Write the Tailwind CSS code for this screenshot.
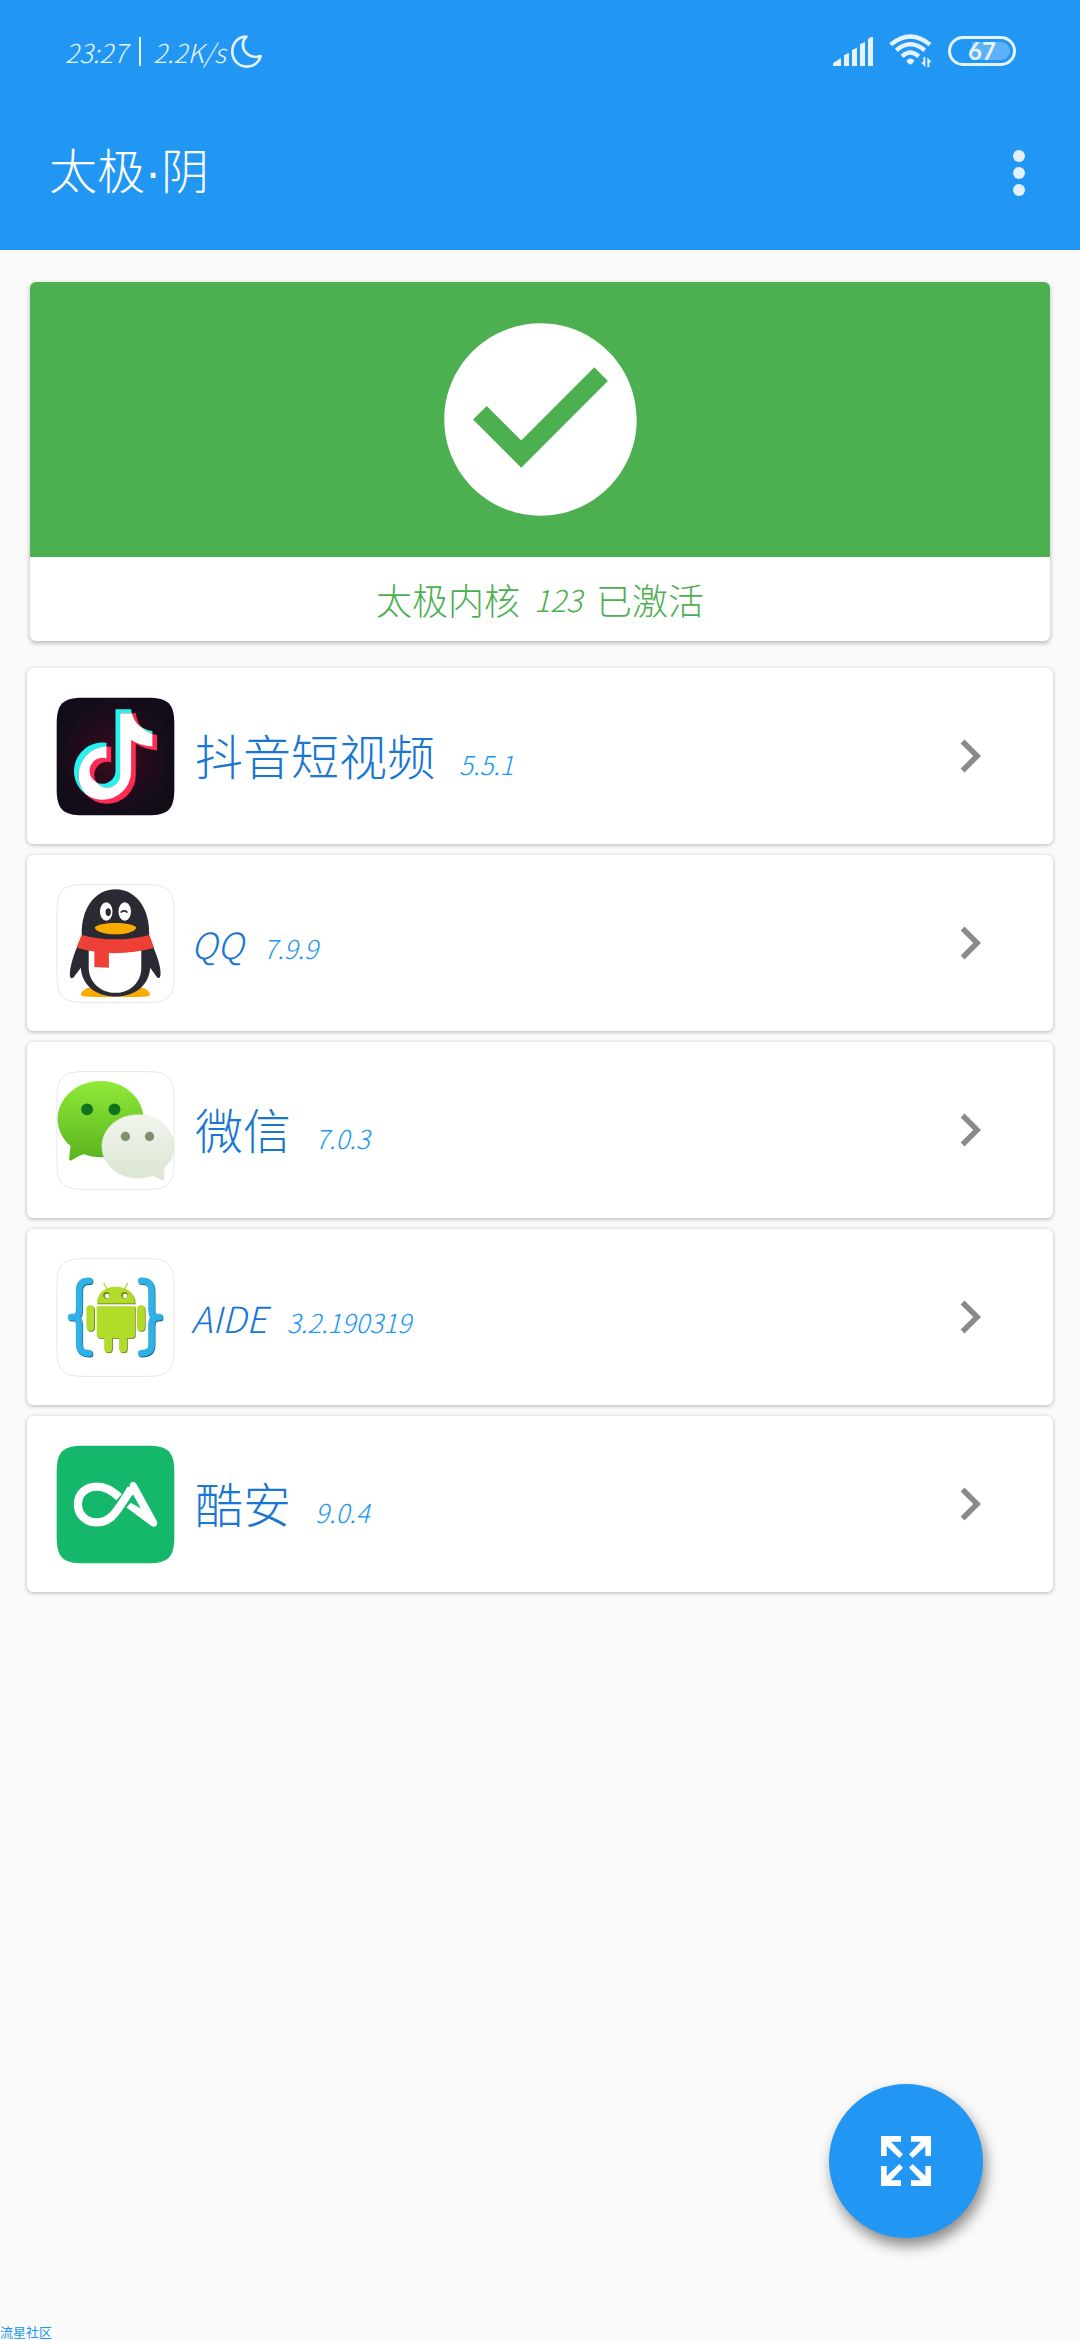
<!DOCTYPE html>
<html lang="zh-CN">
  <head>
    <meta charset="UTF-8" />
    <meta name="viewport" content="width=device-width, initial-scale=1.0" />
    <title>太极·阴</title>
    <script src="https://cdn.jsdelivr.net/npm/@tailwindcss/browser@4"></script>
  </head>
  <body class="bg-[#fafafa] min-h-screen flex flex-col font-['Noto_Sans_CJK_SC',sans-serif] font-light">

    <header class="bg-[#2196f3] text-white">
      <!-- status bar -->
      <div class="h-[102px] pl-[65px] pr-16 flex items-center justify-between text-[#e6f3fe]">
        <div class="flex items-center text-[26px] italic">
          <span>23:27</span>
          <span class="w-0.5 h-[29px] bg-[#e6f3fe] mx-3"></span>
          <span>2.2K/s</span>
          <svg class="w-[33px] h-[35px] ml-1" viewBox="668 98 100 106" fill="none" stroke="currentColor" stroke-width="8" stroke-linejoin="round">
            <path d="M718 106C690 106 675 128 675 151C675 178 695 197 719 197C740 197 756 184 761 165C738 173 707 160 707 130C707 118 712 112 718 106Z" />
          </svg>
        </div>
        <div class="flex items-center gap-4">
          <svg class="w-10 h-[29px]" viewBox="162 108 120 87" fill="currentColor">
            <path d="M162 187L186 171V195H162ZM195 163L210 155V195H195ZM219 147L234 140V195H219ZM243 130L258 123V195H243ZM267 114L276 108H282V195H267Z" />
          </svg>
          <svg class="w-[43px] h-[34px]" viewBox="329 107 129 102">
            <g fill="none" stroke="currentColor" stroke-width="13">
              <path d="M334 139Q393 90 452 139" />
              <path d="M351 156Q393 120 436 156" />
              <path d="M368 174Q393 151 418 174" />
            </g>
            <path fill="currentColor" d="M381 187Q393 172 405 187Q402 196 393 199Q384 196 381 187ZM432 177H438V207L425 192H432ZM444 207V177L457 192H450V207Z" />
          </svg>
          <div class="relative w-[68px] h-[30px] rounded-full border-3 border-current flex items-center justify-center">
            <span class="absolute right-[3px] inset-y-[3px] w-[38px] rounded-r-full bg-[#5cb1f8]"></span>
            <span class="relative font-[Lato] font-bold text-2xl leading-6">67</span>
          </div>
        </div>
      </div>
      <!-- toolbar -->
      <div class="h-[142px] mb-1.5 pl-[49px] pr-[45px] flex items-center justify-between">
        <h1 class="text-5xl font-['Liberation_Sans','Noto_Sans_CJK_SC',sans-serif]">太极·阴</h1>
        <button type="button" aria-label="更多选项" class="w-8 h-16 flex flex-col items-center justify-center gap-[5px]">
          <span class="size-3 rounded-full bg-[#e3f1fd]"></span>
          <span class="size-3 rounded-full bg-[#e3f1fd]"></span>
          <span class="size-3 rounded-full bg-[#e3f1fd]"></span>
        </button>
      </div>
    </header>

    <main class="grow pt-8">
      <section class="mx-[30px] bg-white rounded-md overflow-hidden shadow-[0_2px_5px_rgba(0,0,0,0.28)]">
        <div class="bg-[#4caf50] py-[22px] flex justify-center">
          <svg class="size-[231px] text-white" viewBox="0 0 24 24" fill="currentColor">
            <path d="M12 2C6.48 2 2 6.48 2 12s4.48 10 10 10 10-4.48 10-10S17.52 2 12 2zm-2 15l-5-5 1.41-1.41L10 14.17l7.59-7.59L19 8l-9 9z" />
          </svg>
        </div>
        <p class="h-[84px] flex items-center justify-center gap-3.5 text-[#4caf50] text-[36px]">
          <span>太极内核</span>
          <span class="text-[30px] italic">123</span>
          <span>已激活</span>
        </p>
      </section>

      <ul class="mt-[27px] mx-[27px] space-y-[11px]">
        <li>
          <a href="#" class="h-44 pl-[29px] pr-[50px] flex items-center bg-white rounded-md shadow-[0_1px_4px_rgba(0,0,0,0.28)]">
            <svg class="size-[119px]" viewBox="106 109 358 358">
              <defs>
                <radialGradient id="night"><stop offset="0" stop-color="#3a0b1e" /><stop offset="1" stop-color="#120c19" /></radialGradient>
                <path id="note" d="M285 146H332C336 180 356 206 396 211V258C372 256 350 249 332 238V332A86 86 0 1 1 258 247V294A39 39 0 1 0 285 332Z" />
                <clipPath id="note-shift"><use href="#note" transform="translate(14 12)" /></clipPath>
              </defs>
              <path fill="url(#night)" d="M188 111H382C444 111 462 129 462 191V385C462 447 444 465 382 465H188C126 465 108 447 108 385V191C108 129 126 111 188 111Z" />
              <use href="#note" fill="#25f4ee" />
              <use href="#note" fill="#fe2c55" transform="translate(14 12)" />
              <use href="#note" fill="#fff" clip-path="url(#note-shift)" />
            </svg>
            <span class="ml-5 flex items-baseline gap-6">
              <span class="text-5xl text-[#1976d2]">抖音短视频</span>
              <span class="text-[26px] italic text-[#2196f3]">5.5.1</span>
            </span>
            <svg class="size-[66px] ml-auto" viewBox="0 0 24 24" fill="#8a8a8a"><path d="M10 6L8.59 7.41 13.17 12l-4.58 4.59L10 18l6-6z" /></svg>
          </a>
        </li>
        <li>
          <a href="#" class="h-44 pl-[29px] pr-[50px] flex items-center bg-white rounded-md shadow-[0_1px_4px_rgba(0,0,0,0.28)]">
            <svg class="size-[119px]" viewBox="106 99 358 360">
              <path fill="#fff" stroke="#e6e6e6" stroke-width="3" d="M188 101H382C444 101 462 119 462 181V377C462 439 444 457 382 457H188C126 457 108 439 108 377V181C108 119 126 101 188 101Z" />
              <path fill="#faab00" d="M180 434C183 420 197 412 216 412L285 434L354 412C373 412 387 420 390 434C388 442 350 441 285 440C220 441 182 442 180 434Z" />
              <path fill="#2a2a32" d="M183 255C180 175 222 115 285 115C348 115 390 175 387 255L400 292C412 320 424 355 421 375C419 385 415 386 410 380L390 352C386 405 345 439 285 439C225 439 184 405 180 352L159 380C152 387 148 384 147 375C146 355 156 320 168 292Z" />
              <path fill="#fff" d="M204 296H363V352C363 396 329 428 285 428C240 428 204 396 204 352Z" />
              <ellipse cx="257" cy="182" rx="19" ry="28" fill="#fff" />
              <ellipse cx="313" cy="182" rx="19" ry="28" fill="#fff" />
              <ellipse cx="263" cy="184" rx="8" ry="12" fill="#2a2a32" />
              <path fill="none" stroke="#2a2a32" stroke-width="5" stroke-linecap="round" d="M302 184Q311 177 320 184" />
              <path fill="#faab00" d="M222 231C232 212 338 212 348 231C338 258 232 258 222 231Z" />
              <path fill="#ee4037" d="M183 253Q285 280 387 253L402 292Q340 310 265 308V352L221 350V303Q192 300 167 291Z" />
            </svg>
            <span class="ml-4 flex items-baseline gap-5">
              <span class="text-[36px] italic text-[#1976d2]">QQ</span>
              <span class="text-[26px] italic text-[#2196f3]">7.9.9</span>
            </span>
            <svg class="size-[66px] ml-auto" viewBox="0 0 24 24" fill="#8a8a8a"><path d="M10 6L8.59 7.41 13.17 12l-4.58 4.59L10 18l6-6z" /></svg>
          </a>
        </li>
        <li>
          <a href="#" class="h-44 pl-[29px] pr-[50px] flex items-center bg-white rounded-md shadow-[0_1px_4px_rgba(0,0,0,0.28)]">
            <svg class="size-[119px]" viewBox="106 105 358 360">
              <defs>
                <linearGradient id="bubble-green" x2="0" y2="1"><stop offset="0" stop-color="#90ea38" /><stop offset="1" stop-color="#59b31d" /></linearGradient>
                <linearGradient id="bubble-pale" x2="0" y2="1"><stop offset="0" stop-color="#f1f5ed" /><stop offset="1" stop-color="#dae5d1" /></linearGradient>
              </defs>
              <path fill="#fff" stroke="#e6e6e6" stroke-width="3" d="M188 107H382C444 107 462 125 462 187V383C462 445 444 463 382 463H188C126 463 108 445 108 383V187C108 125 126 107 188 107Z" />
              <path fill="url(#bubble-green)" d="M240 135C312 135 370 187 370 250C370 314 312 366 240 366C222 366 206 363 190 357C180 358 164 369 152 375C146 377 144 373 145 368L149 332C125 311 110 282 110 250C110 187 168 135 240 135Z" />
              <circle cx="199" cy="221" r="18" fill="#0f7320" />
              <circle cx="282" cy="221" r="18" fill="#0f7320" />
              <path fill="url(#bubble-pale)" stroke="#dfe5da" stroke-width="2" d="M352 237C412 237 461 280 461 333C461 359 450 381 431 399L432 429C432 434 429 436 424 434C416 430 404 422 397 421C383 426 368 429 352 429C292 429 244 386 244 333C244 280 292 237 352 237Z" />
              <circle cx="315" cy="303" r="14" fill="#7e9070" />
              <circle cx="388" cy="303" r="14" fill="#7e9070" />
            </svg>
            <span class="ml-5 flex items-baseline gap-6">
              <span class="text-5xl text-[#1976d2]">微信</span>
              <span class="text-[26px] italic text-[#2196f3]">7.0.3</span>
            </span>
            <svg class="size-[66px] ml-auto" viewBox="0 0 24 24" fill="#8a8a8a"><path d="M10 6L8.59 7.41 13.17 12l-4.58 4.59L10 18l6-6z" /></svg>
          </a>
        </li>
        <li>
          <a href="#" class="h-44 pl-[29px] pr-[50px] flex items-center bg-white rounded-md shadow-[0_1px_4px_rgba(0,0,0,0.28)]">
            <svg class="size-[119px]" viewBox="106 105 358 360">
              <defs>
                <path id="brace" d="M207 175C186 175 176 184 176 204V260C176 276 170 285 158 285H152H158C170 285 176 294 176 310V366C176 386 186 394 207 394" />
                <g id="robot">
                  <path d="M229 243C229 212 252 192 286 192C320 192 344 212 344 243Z" />
                  <path d="M228 251H344V338Q344 346 336 347H320V379A12 12 0 0 1 296 379V347H275V379A12 12 0 0 1 251 379V347H236Q228 346 228 338Z" />
                  <rect x="197" y="248" width="24" height="78" rx="12" />
                  <rect x="350" y="248" width="24" height="78" rx="12" />
                </g>
              </defs>
              <path fill="#fff" stroke="#e6e6e6" stroke-width="3" d="M188 107H382C444 107 462 125 462 187V383C462 445 444 463 382 463H188C126 463 108 445 108 383V187C108 125 126 107 188 107Z" />
              <g fill="none" stroke-width="20" stroke-linecap="round" stroke-linejoin="round">
                <g stroke="#17678c">
                  <use href="#brace" transform="translate(1 2)" />
                  <use href="#brace" transform="translate(572 2) scale(-1 1)" />
                </g>
                <g stroke="#2fb1e5">
                  <use href="#brace" transform="translate(-1 -1)" />
                  <use href="#brace" transform="translate(570 -1) scale(-1 1)" />
                </g>
              </g>
              <use href="#robot" fill="#5c7416" transform="translate(2 2)" />
              <use href="#robot" fill="#b2dc2a" />
              <path fill="none" stroke="#b2dc2a" stroke-width="4" stroke-linecap="round" d="M250 182L261 201M322 182L311 201" />
              <circle cx="258" cy="218" r="10" fill="#708a1c" />
              <circle cx="312" cy="218" r="10" fill="#708a1c" />
              <circle cx="260" cy="220" r="7" fill="#fff" />
              <circle cx="314" cy="220" r="7" fill="#fff" />
            </svg>
            <span class="ml-4 flex items-baseline gap-5">
              <span class="text-[36px] italic text-[#1976d2]">AIDE</span>
              <span class="text-[26px] italic text-[#2196f3]">3.2.190319</span>
            </span>
            <svg class="size-[66px] ml-auto" viewBox="0 0 24 24" fill="#8a8a8a"><path d="M10 6L8.59 7.41 13.17 12l-4.58 4.59L10 18l6-6z" /></svg>
          </a>
        </li>
        <li>
          <a href="#" class="h-44 pl-[29px] pr-[50px] flex items-center bg-white rounded-md shadow-[0_1px_4px_rgba(0,0,0,0.28)]">
            <svg class="size-[119px]" viewBox="106 109 358 358">
              <path fill="#15b76a" d="M188 111H382C444 111 462 129 462 191V385C462 447 444 465 382 465H188C126 465 108 447 108 385V191C108 129 126 111 188 111Z" />
              <path fill="none" stroke="#fff" stroke-width="25" d="M296 266C272 245 254 234 228 234C196 234 172 256 172 288C172 319 196 342 228 342C264 342 282 318 302 288L333 240" />
              <path fill="#fff" d="M328 226Q338 213 348 226L409 338Q413 348 407 353Q401 358 392 352L318 297L331 283L361 300L338 258L326 268Z" />
            </svg>
            <span class="ml-5 flex items-baseline gap-6">
              <span class="text-5xl text-[#1976d2]">酷安</span>
              <span class="text-[26px] italic text-[#2196f3]">9.0.4</span>
            </span>
            <svg class="size-[66px] ml-auto" viewBox="0 0 24 24" fill="#8a8a8a"><path d="M10 6L8.59 7.41 13.17 12l-4.58 4.59L10 18l6-6z" /></svg>
          </a>
        </li>
      </ul>
    </main>

    <button type="button" aria-label="全屏" class="fixed right-[97px] bottom-[102px] size-[154px] rounded-full bg-[#2196f3] flex items-center justify-center shadow-[3px_8px_14px_rgba(0,0,0,0.45)]">
      <svg class="size-[50px]" viewBox="0 0 150 150" fill="#fff">
        <path id="arrow" d="M0 0H60V17H30L66 55L55 66L17 30V60H0Z" />
        <use href="#arrow" transform="rotate(90 75 75)" />
        <use href="#arrow" transform="rotate(180 75 75)" />
        <use href="#arrow" transform="rotate(270 75 75)" />
      </svg>
    </button>

    <footer class="text-[13px] leading-4 font-normal text-[#2196f3]">流星社区</footer>
  </body>
</html>
